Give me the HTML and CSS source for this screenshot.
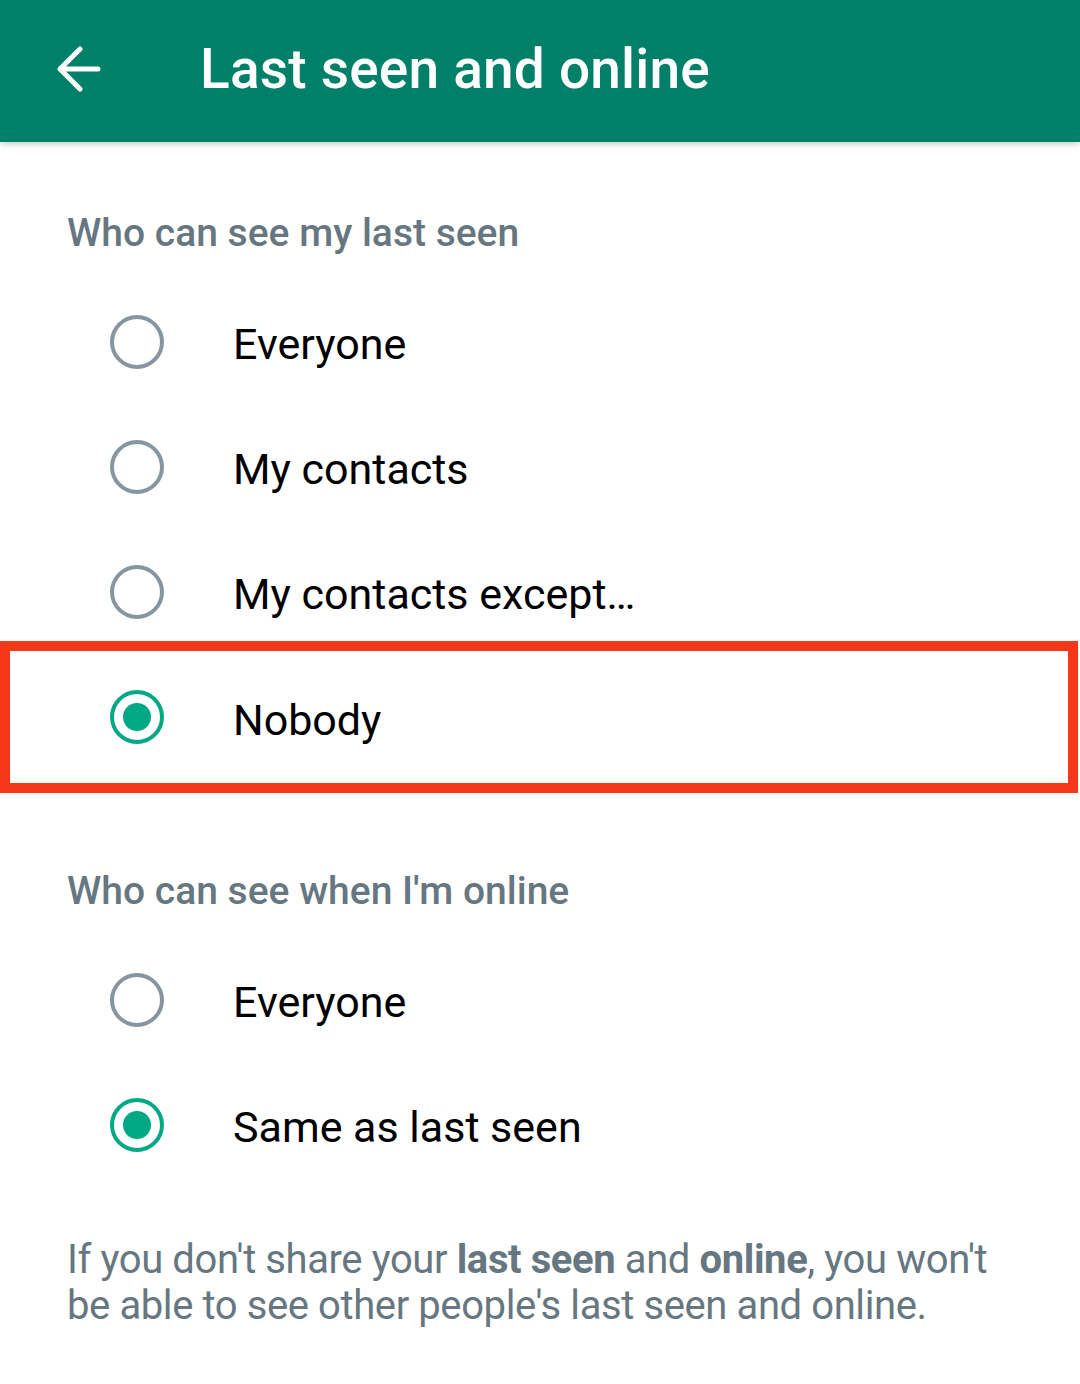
FILE: index.html
```html
<!DOCTYPE html>
<html lang="en">
<head>
  <meta charset="UTF-8">
  <meta name="viewport" content="width=device-width, initial-scale=1.0">
  <title>Last seen and online</title>
  <link rel="stylesheet" href="styles.css">
</head>
<body>

  <header class="app-bar">
    <button class="app-bar__back" aria-label="Back">
      <svg width="50" height="50" viewBox="0 0 50 50">
        <path d="M46 23H9 M28 3L8 23L28 43" fill="none" stroke="#fff" stroke-width="5" stroke-linecap="round" stroke-linejoin="round"/>
      </svg>
    </button>
    <h1 class="app-bar__title">Last seen and online</h1>
  </header>

  <main class="settings">
    <section class="group">
      <h2 class="group__title">Who can see my last seen</h2>
      <div class="option">
        <span class="radio"></span>
        <span class="option__label">Everyone</span>
      </div>
      <div class="option">
        <span class="radio"></span>
        <span class="option__label">My contacts</span>
      </div>
      <div class="option">
        <span class="radio"></span>
        <span class="option__label">My contacts except…</span>
      </div>
      <div class="option option--highlight">
        <span class="radio radio--checked"></span>
        <span class="option__label">Nobody</span>
      </div>
    </section>

    <section class="group group--second">
      <h2 class="group__title">Who can see when I'm online</h2>
      <div class="option">
        <span class="radio"></span>
        <span class="option__label">Everyone</span>
      </div>
      <div class="option">
        <span class="radio radio--checked"></span>
        <span class="option__label">Same as last seen</span>
      </div>
    </section>

    <p class="note">
      If you don't share your <b>last seen</b> and <b>online</b>, you won't<br>
      be able to see other people's last seen and online.
    </p>
  </main>

</body>
</html>
```

FILE: styles.css
```css
:root {
  --clr-green: #008069;
  --clr-teal: #00a884;
  --clr-gray: #667781;
  --clr-radio: #8696a0;
  --clr-red: #f5381a;

  font-family: Roboto, "Noto Sans", sans-serif;
}

* {
  box-sizing: border-box;
}

body {
  margin: 0;
  padding: 0;
  background: #fff;
  color: #000;
}

.app-bar {
  height: 142px;
  background: var(--clr-green);
  display: flex;
  align-items: center;
  box-shadow: 0 2px 6px rgba(0, 60, 50, 0.25);
  position: relative;
}

.app-bar__back {
  background: none;
  border: 0;
  padding: 0;
  margin: 0 0 0 52px;
  width: 50px;
  height: 50px;
  display: flex;
}

.app-bar__title {
  margin: 0 0 4px 98px;
  font-size: 55px;
  font-weight: 500;
  color: #fff;
  letter-spacing: 0.2px;
}

.settings {
  padding-top: 66px;
}

.group__title {
  margin: 0 0 0 67px;
  font-size: 39px;
  font-weight: 500;
  color: var(--clr-gray);
  line-height: 50px;
}

.group--second {
  margin-top: 73px;
}

.option {
  height: 125px;
  display: flex;
  align-items: center;
  padding-left: 110px;
}

.group__title + .option {
  margin-top: 21px;
}

.option--highlight {
  height: 152px;
  margin: -13px 2px 0 0;
  border: 10px solid var(--clr-red);
  padding-left: 100px;
}

.radio {
  width: 54px;
  height: 54px;
  border: 4.5px solid var(--clr-radio);
  border-radius: 50%;
  flex-shrink: 0;
  position: relative;
}

.radio--checked {
  border-color: var(--clr-teal);
}

.radio--checked::after {
  content: '';
  position: absolute;
  inset: 9px;
  border-radius: 50%;
  background: var(--clr-teal);
}

.option__label {
  margin-left: 69px;
  font-size: 43px;
  line-height: 1;
  padding-top: 6px;
}

.note {
  margin: 50px 40px 0 67px;
  font-size: 40px;
  line-height: 46px;
  letter-spacing: -0.4px;
  color: var(--clr-gray);
}

.note b {
  font-weight: 700;
}
```
